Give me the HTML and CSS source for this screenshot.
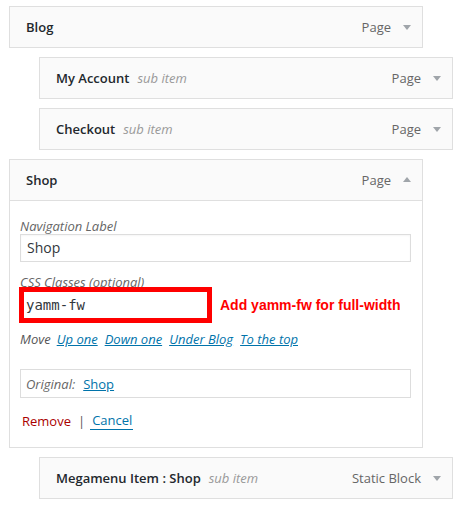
FILE: index.html
```html
<!DOCTYPE html>
<html>
<head>
<meta charset="utf-8">
<link rel="stylesheet" href="styles.css">
</head>
<body>
<div class="menu">
  <div class="item">
    <div class="bar">
      <span class="title">Blog</span>
      <span class="type">Page</span>
      <span class="arrow down"></span>
    </div>
  </div>
  <div class="item sub">
    <div class="bar">
      <span class="title">My Account</span><span class="subitem">sub item</span>
      <span class="type">Page</span>
      <span class="arrow down"></span>
    </div>
  </div>
  <div class="item sub">
    <div class="bar">
      <span class="title">Checkout</span><span class="subitem">sub item</span>
      <span class="type">Page</span>
      <span class="arrow down"></span>
    </div>
  </div>
  <div class="item open">
    <div class="bar">
      <span class="title">Shop</span>
      <span class="type">Page</span>
      <span class="arrow up"></span>
    </div>
    <div class="settings">
      <div class="label">Navigation Label</div>
      <div class="field">Shop</div>
      <div class="label label-css">CSS Classes (optional)</div>
      <div class="css-row">
        <div class="field-red">yamm-fw</div>
        <div class="note">Add yamm-fw for full-width</div>
      </div>
      <div class="move">
        <span class="move-label">Move</span>
        <a class="link">Up one</a>
        <a class="link">Down one</a>
        <a class="link">Under Blog</a>
        <a class="link">To the top</a>
      </div>
      <div class="original">
        <span class="orig-label">Original:</span>
        <a class="link plain">Shop</a>
      </div>
      <div class="actions">
        <span class="remove">Remove</span>
        <span class="sep">|</span>
        <span class="cancel">Cancel</span>
      </div>
    </div>
  </div>
  <div class="item sub">
    <div class="bar">
      <span class="title">Megamenu Item : Shop</span><span class="subitem">sub item</span>
      <span class="type">Static Block</span>
      <span class="arrow down"></span>
    </div>
  </div>
</div>
</body>
</html>
```

FILE: styles.css
```css
html, body {
  margin: 0;
  padding: 0;
  background: #fff;
}
body {
  font-family: "Open Sans", "Liberation Sans", sans-serif;
  font-size: 13px;
  color: #23282d;
}
.menu {
  padding: 6px 0 0 9px;
  display: flex;
  flex-direction: column;
  gap: 9px;
}
.item {
  width: 412px;
  border: 1px solid #dfdfdf;
  background: #fafafa;
}
.item.sub {
  margin-left: 30px;
}
.bar {
  height: 40px;
  display: flex;
  align-items: center;
  padding: 0 11px 0 16px;
}
.title {
  font-weight: 600;
  color: #23282d;
}
.subitem {
  margin-left: 8px;
  font-style: italic;
  color: #999;
}
.type {
  margin-left: auto;
  color: #666;
  margin-right: 12px;
}
.arrow {
  width: 0;
  height: 0;
  border-left: 4px solid transparent;
  border-right: 4px solid transparent;
}
.arrow.down {
  border-top: 5px solid #a0a5aa;
  margin-top: 1px;
}
.arrow.up {
  border-bottom: 5px solid #a0a5aa;
  margin-top: -1px;
}
.item.open .bar {
  border-bottom: 1px solid #dfdfdf;
}
.settings {
  background: #fff;
  padding: 17px 12px 17px 10px;
}
.label {
  font-style: italic;
  color: #666;
  line-height: 16px;
}
.field {
  box-sizing: border-box;
  width: 391px;
  height: 28px;
  border: 1px solid #ddd;
  background: #fff;
  font-size: 14px;
  line-height: 26px;
  padding: 0 6px;
  color: #32373c;
  box-shadow: inset 0 1px 2px rgba(0,0,0,0.04);
}
.label-css {
  margin-top: 12px;
}
.css-row {
  display: flex;
  align-items: center;
  margin-top: -3px;
  margin-left: -1px;
}
.field-red {
  box-sizing: border-box;
  width: 193px;
  height: 36px;
  border: 5px solid #ff0000;
  background: #fff;
  font-family: "DejaVu Sans Mono", monospace;
  font-size: 14px;
  line-height: 26px;
  padding: 0 2px;
  color: #32373c;
}
.note {
  margin-left: 8px;
  font-family: "Liberation Sans", Arial, sans-serif;
  font-weight: bold;
  font-size: 14px;
  color: #ff0000;
}
.move {
  margin-top: 7px;
  line-height: 18px;
  display: flex;
  gap: 7px;
  font-style: italic;
}
.move-label {
  color: #555;
  margin-right: -1px;
}
.link {
  color: #0073aa;
  text-decoration: underline;
  font-style: italic;
}
.original {
  box-sizing: border-box;
  width: 391px;
  height: 29px;
  margin-top: 21px;
  border: 1px solid #ddd;
  padding: 0 5px;
  display: flex;
  align-items: center;
  gap: 8px;
}
.orig-label {
  font-style: italic;
  color: #666;
}
.link.plain {
  font-style: normal;
}
.actions {
  margin-top: 13px;
  line-height: 18px;
  display: flex;
  align-items: center;
  padding-left: 2px;
}
.remove {
  color: #a00;
}
.sep {
  margin: 0 5px 0 7px;
  color: #555;
}
.cancel {
  color: #0073aa;
  padding: 0 1px 0 2px;
  border-bottom: 1px solid #0073aa;
}
```
